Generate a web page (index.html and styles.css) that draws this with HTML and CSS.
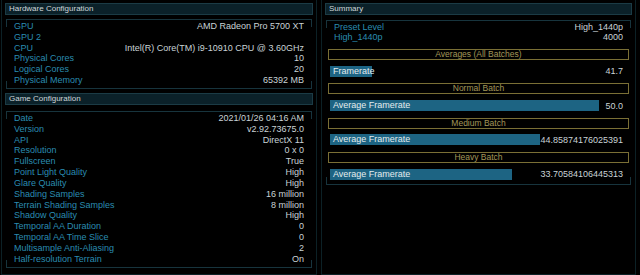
FILE: index.html
```html
<!DOCTYPE html>
<html>
<head>
<meta charset="utf-8">
<link rel="stylesheet" href="styles.css">
</head>
<body>
<div class="page">
  <div class="col left">
    <div class="hdr">Hardware Configuration</div>
    <div class="box hw">
      <div class="row"><span class="k">GPU</span><span class="v">AMD Radeon Pro 5700 XT</span></div>
      <div class="row"><span class="k">GPU 2</span><span class="v"></span></div>
      <div class="row"><span class="k">CPU</span><span class="v">Intel(R) Core(TM) i9-10910 CPU @ 3.60GHz</span></div>
      <div class="row"><span class="k">Physical Cores</span><span class="v">10</span></div>
      <div class="row"><span class="k">Logical Cores</span><span class="v">20</span></div>
      <div class="row"><span class="k">Physical Memory</span><span class="v">65392 MB</span></div>
    </div>
    <div class="hdr game-hdr">Game Configuration</div>
    <div class="box game">
      <div class="row"><span class="k">Date</span><span class="v">2021/01/26 04:16 AM</span></div>
      <div class="row"><span class="k">Version</span><span class="v">v2.92.73675.0</span></div>
      <div class="row"><span class="k">API</span><span class="v">DirectX 11</span></div>
      <div class="row"><span class="k">Resolution</span><span class="v">0 x 0</span></div>
      <div class="row"><span class="k">Fullscreen</span><span class="v">True</span></div>
      <div class="row"><span class="k">Point Light Quality</span><span class="v">High</span></div>
      <div class="row"><span class="k">Glare Quality</span><span class="v">High</span></div>
      <div class="row"><span class="k">Shading Samples</span><span class="v">16 million</span></div>
      <div class="row"><span class="k">Terrain Shading Samples</span><span class="v">8 million</span></div>
      <div class="row"><span class="k">Shadow Quality</span><span class="v">High</span></div>
      <div class="row"><span class="k">Temporal AA Duration</span><span class="v">0</span></div>
      <div class="row"><span class="k">Temporal AA Time Slice</span><span class="v">0</span></div>
      <div class="row"><span class="k">Multisample Anti-Aliasing</span><span class="v">2</span></div>
      <div class="row"><span class="k">Half-resolution Terrain</span><span class="v">On</span></div>
    </div>
  </div>
  <div class="col right">
    <div class="hdr">Summary</div>
    <div class="box sum">
      <div class="row"><span class="k">Preset Level</span><span class="v">High_1440p</span></div>
      <div class="row"><span class="k">High_1440p</span><span class="v">4000</span></div>
      <div class="batch first">Averages (All Batches)</div>
      <div class="bar-row"><div class="bar" style="width:42px"><span>Framerate</span></div><span class="num">41.7</span></div>
      <div class="batch">Normal Batch</div>
      <div class="bar-row"><div class="bar" style="width:269px"><span>Average Framerate</span></div><span class="num">50.0</span></div>
      <div class="batch">Medium Batch</div>
      <div class="bar-row"><div class="bar" style="width:241px"><span>Average Framerate</span></div><span class="num">44.85874176025391</span></div>
      <div class="batch">Heavy Batch</div>
      <div class="bar-row"><div class="bar" style="width:182px"><span>Average Framerate</span></div><span class="num">33.70584106445313</span></div>
    </div>
  </div>
</div>
</body>
</html>
```
FILE: styles.css
```css
html, body {
  margin: 0;
  padding: 0;
  background: #000;
  width: 640px;
  height: 275px;
  overflow: hidden;
}
body {
  font-family: "Liberation Sans", Arial, sans-serif;
  font-size: 9px;
  color: #c9d3d6;
}
.page {
  display: flex;
  gap: 4px;
  padding-left: 1px;
  height: 275px;
}
.col {
  border: 1px solid #0c2126;
  border-top: none;
  padding: 3px 3px 0 3px;
  box-sizing: border-box;
  height: 275px;
}
.left { width: 316px; }
.right { width: 315px; }
.hdr {
  height: 12px;
  line-height: 10px;
  background: #0b2129;
  border: 1px solid #1b3b45;
  box-sizing: border-box;
  padding-left: 3px;
  color: #cfd7da;
  font-size: 8px;
}
.box {
  margin: 4px 1px 0 1px;
  border: 1px solid transparent;
  border-image: linear-gradient(to bottom, #17343d 0, #17343d 8px, transparent 8px, transparent calc(100% - 8px), #17343d calc(100% - 8px), #17343d 100%) 1;
  padding: 1px 7px 2px 7px;
}
.game-hdr { margin-top: 4px; }
.game { margin-top: 6px; }
.row {
  display: flex;
  justify-content: space-between;
  height: 10.83px;
  line-height: 10.83px;
}
.k { color: #2a8cb0; }
.v { color: #c9d3d6; }
.sum {
  margin-top: 5px;
  padding: 0.5px 1px 4px 1px;
}
.sum .row { padding: 0 6px 0 6px; }
.batch {
  height: 11px;
  line-height: 9px;
  border: 1px solid #7a6f35;
  box-sizing: border-box;
  text-align: center;
  color: #a39759;
  font-size: 8.5px;
}
.batch.first { margin-top: 6px; }
.bar-row {
  display: flex;
  align-items: center;
  justify-content: space-between;
  height: 11px;
  margin: 5.8px 0 6.43px 2px;
  padding-right: 6px;
}
.bar-row:last-child { margin-bottom: 0; }
.bar {
  height: 11px;
  background: #1d6483;
  white-space: nowrap;
  line-height: 11px;
  padding-left: 3px;
  box-sizing: border-box;
  color: #e4ecee;
}
.num { color: #c9d3d6; }
```
